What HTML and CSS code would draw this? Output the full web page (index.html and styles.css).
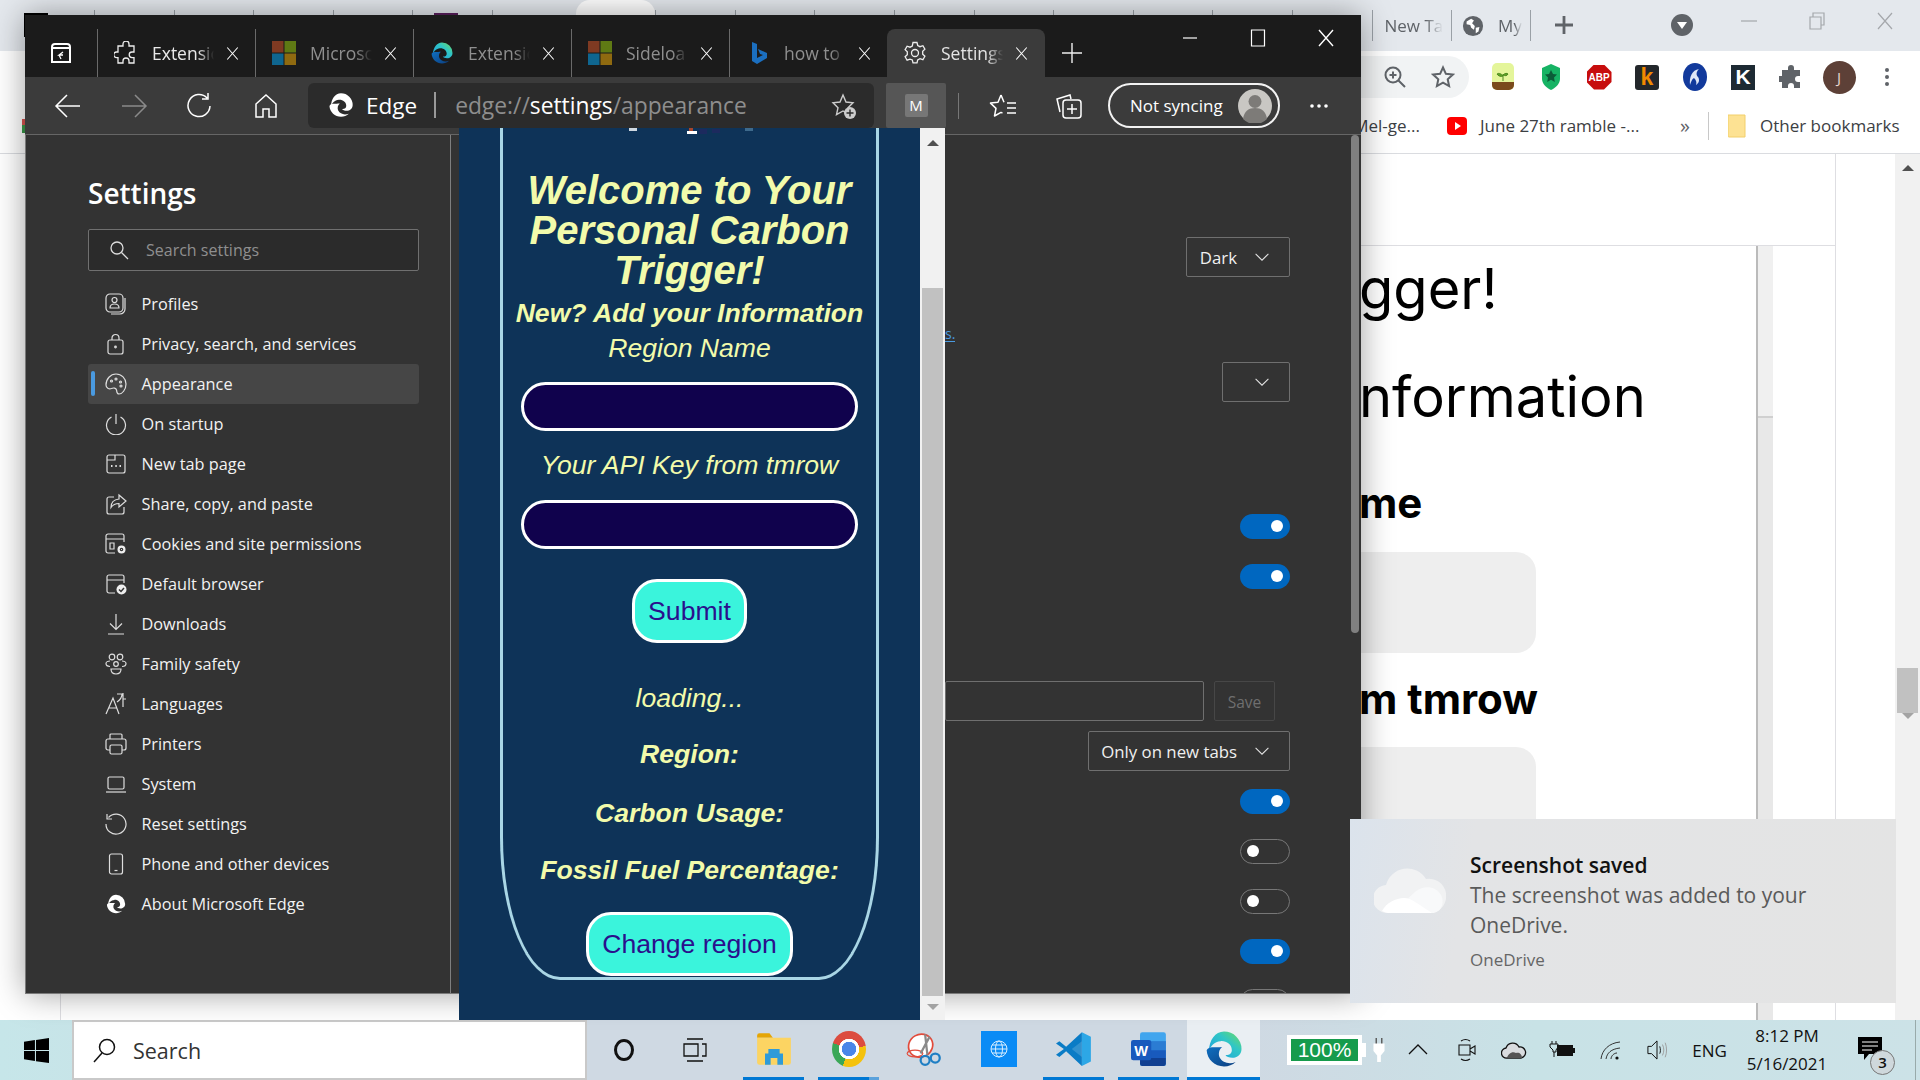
FILE: index.html
```html
<!DOCTYPE html>
<html lang="en">
<head>
  <meta charset="UTF-8">
  <meta name="viewport" content="width=device-width, initial-scale=1.0">
  <title>Carbon Trigger popup over Edge settings</title>
  <link rel="stylesheet" href="styles.css">
</head>
<body>
<svg class="sprite" aria-hidden="true">
  <defs>
    <linearGradient id="edgeTop" x1="0" y1="1" x2="1" y2="0"><stop offset="0" stop-color="#1b9de2"/><stop offset=".6" stop-color="#30c6c6"/><stop offset="1" stop-color="#6fdc5f"/></linearGradient>
    <linearGradient id="edgeLow" x1="0" y1="0" x2="1" y2="1"><stop offset="0" stop-color="#0f6fc0"/><stop offset="1" stop-color="#0c3f80"/></linearGradient>
    <symbol id="i-x" viewBox="0 0 20 20"><path d="M3 2l14 16M17 2L3 18" fill="none" stroke="currentColor" stroke-width="1.4"/></symbol>
    <symbol id="i-chev" viewBox="0 0 20 12"><path d="M2 2l8 8 8-8" fill="none" stroke="currentColor" stroke-width="1.3"/></symbol>
    <symbol id="i-edge" viewBox="0 0 24 24"><path fill="currentColor" d="M12 2a10 10 0 0 1 10 10c0 3-2.5 5-5.2 5-1.8 0-3.4-.7-3.9-1.6 2 .2 3.6-.9 3.6-2.8 0-3.3-3.2-5.4-6.4-5.1-3.6.3-5.9 3-6.6 5.5C3.5 7 7 2 12 2z"/><path fill="currentColor" d="M2.1 12.8C2.4 18 6.8 22 12 22c2.6 0 5-1 6.7-2.6-3.4 1.4-7.5.6-9.1-2.6-.9-1.8-.5-4.6 1.4-6-4.4.4-7.9-.7-8.9 2z"/></symbol>
    <symbol id="i-edgec" viewBox="0 0 24 24"><path fill="url(#edgeTop)" d="M12 1.5a10.5 10.5 0 0 1 10.5 10.5c0 3.2-2.6 5.3-5.5 5.3-1.9 0-3.6-.7-4.1-1.7 2.1.2 3.8-.9 3.8-2.9 0-3.5-3.4-5.7-6.7-5.4-3.8.3-6.2 3.1-7 5.8C3 6.8 6.8 1.5 12 1.5z"/><path fill="url(#edgeLow)" d="M1.6 12.8C1.9 18.3 6.5 22.5 12 22.5c2.7 0 5.2-1 7-2.7-3.6 1.5-7.9.6-9.6-2.7-.9-1.9-.5-4.8 1.5-6.3-4.6.4-8.3-.7-9.3 2z"/></symbol>
    <symbol id="i-ms" viewBox="0 0 24 24"><path fill="#7f3a22" d="M0 0h11.5v11.5H0z"/><path fill="#5f7a14" d="M12.5 0H24v11.5H12.5z"/><path fill="#0f6690" d="M0 12.5h11.5V24H0z"/><path fill="#8f6a10" d="M12.5 12.5H24V24H12.5z"/></symbol>
  </defs>
</svg>

<div class="desktop">
  <!-- chrome window in the back -->
  <div class="chrome">
    <div class="chrome-tabs">
      <span class="ctab-corner"></span>
      <span class="ctab"><i class="ctab-ico"></i></span>
      <span class="ctab"><i class="ctab-ico"></i></span>
      <span class="ctab"><i class="ctab-ico"></i></span>
      <span class="ctab"><i class="ctab-ico pale"></i></span>
      <span class="ctab"><i class="ctab-ico plum"></i></span>
      <span class="ctab"><i class="ctab-ico pale"></i></span>
      <span class="ctab on"></span>
      <span class="ctab"><i class="ctab-ico"></i></span>
      <span class="ctab"><i class="ctab-ico"></i></span>
      <span class="ctab"><i class="ctab-ico"></i></span>
      <span class="ctab"><i class="ctab-ico"></i></span>
      <span class="ctab"><i class="ctab-ico"></i></span>
      <span class="ctab"><i class="ctab-ico"></i></span>
      <span class="ctab"><i class="ctab-ico"></i></span>
      <span class="ctab"></span>
      <span class="ctab"></span>
      <span class="ctab ctab-named"><em class="ctab-title">New Ta</em></span>
      <span class="ctab ctab-named ctab-last"><svg class="ctab-globe" viewBox="0 0 24 24"><circle cx="12" cy="12" r="11" fill="#5f6368"/><path fill="#fff" d="M5 7l5-3 3 2-2 3 3 3-1 4-3-2-1-3-4-1zM15 14l4-1-1 5-3 2z"/></svg><em class="ctab-title ctab-my">My</em></span>
      <svg class="chrome-plus" viewBox="0 0 20 20"><path d="M10 1v18M1 10h18" stroke="#5f6368" stroke-width="2.8"/></svg>
      <svg class="chrome-down" viewBox="0 0 22 22"><circle cx="11" cy="11" r="11" fill="#5f6368"/><path d="M6 8h10l-5 7z" fill="#fff"/></svg>
      <svg class="chrome-ctl" viewBox="0 0 20 20"><path d="M2 10h16" stroke="#a4a7ab" stroke-width="1.2"/></svg>
      <svg class="chrome-ctl" viewBox="0 0 20 20"><path d="M3 6h11v12H3zM6 6V2h11v12h-3" fill="none" stroke="#a4a7ab" stroke-width="1.2"/></svg>
      <svg class="chrome-ctl" viewBox="0 0 20 20"><path d="M3 2l14 16M17 2L3 18" stroke="#a4a7ab" stroke-width="1.2"/></svg>
    </div>
    <div class="chrome-toolbar">
      <div class="omnibox">
        <span class="cext"><svg class="ic24" viewBox="0 0 24 24"><circle cx="10" cy="10" r="7.5" fill="none" stroke="#5f6368" stroke-width="2"/><path d="M15.5 15.5L22 22M6.5 10h7M10 6.5v7" stroke="#5f6368" stroke-width="2"/></svg></span>
        <span class="cext"><svg class="ic24" viewBox="0 0 24 24"><path d="M12 2.5l2.9 6.3 6.9.8-5.100 4.700 1.400 6.800-6.100-3.400-6.100 3.400 1.400-6.800L2.200 9.600l6.900-.8z" fill="none" stroke="#5f6368" stroke-width="2"/></svg></span>
      </div>
      <span class="cext"><svg class="ic28" viewBox="0 0 24 28"><rect x="1" y="0" width="22" height="27" rx="5" fill="#e4f59a"/><path d="M1 19h22v3a5 5 0 0 1-5 5H6a5 5 0 0 1-5-5z" fill="#7a4a1c"/><path d="M12 18v-7M12 13c-2-3-5-3-6-2 1 2 4 3 6 2zM12 12c2-2 4-2 5-1-1 2-3 2-5 1z" stroke="#4d8a1e" fill="#5fa427"/></svg></span>
      <span class="cext"><svg class="ic28" viewBox="0 0 24 28"><path d="M12 1l9 4v11c0 5-5 9-9 11-4-2-9-6-9-11V5z" fill="#16b364"/><path d="M12 7l2 4 4 .5-3 3 .8 4.5-3.800-2.200L8.200 19l.8-4.500-3-3 4-.5z" fill="#0b5c38"/></svg></span>
      <span class="cext"><span class="abp">ABP</span></span>
      <span class="cext"><span class="kbox">k</span></span>
      <span class="cext"><svg class="ic28" viewBox="0 0 24 28"><ellipse cx="12" cy="14" rx="12" ry="14" fill="#123a9c"/><path d="M7 22c-1-8 2-15 9-16-3 3-3 6-1 8 2 3 1 6-2 8 1-3 0-5-2-7-2 1-3 4-4 7z" fill="#dfe7f7"/></svg></span>
      <span class="cext"><span class="kbox kbox-dark">K</span></span>
      <span class="cext"><svg class="ic24" viewBox="0 0 24 24"><path fill="#5f6368" d="M9 3a3 3 0 0 1 6 0v2h6v6h-2a3 3 0 0 0 0 6h2v6h-6v-2a3 3 0 0 0-6 0v2H3v-6H1a3 3 0 0 1 0-6h2V5h6z"/></svg></span>
      <span class="cext"><span class="avatar-j">J</span></span>
      <span class="cext"><svg class="ic24" viewBox="0 0 24 24"><circle cx="12" cy="5" r="2" fill="#5f6368"/><circle cx="12" cy="12" r="2" fill="#5f6368"/><circle cx="12" cy="19" r="2" fill="#5f6368"/></svg></span>
    </div>
    <div class="chrome-bookmarks">
      <span class="bm-sliver"></span>
      <span class="bm-text bm-mel">Mel-ge...</span>
      <svg class="bm-yt" viewBox="0 0 20 20"><rect width="20" height="18" y="1" rx="4" fill="#f00"/><path d="M8 6l6 4-6 4z" fill="#fff"/></svg>
      <span class="bm-text bm-june">June 27th ramble -...</span>
      <span class="bm-more">»</span>
      <span class="bm-sep"></span>
      <svg class="bm-folder" viewBox="0 0 18 24"><path d="M0 1h17v22H1a1 1 0 0 1-1-1z" fill="#fde293" stroke="#f2cf6b"/></svg>
      <span class="bm-text">Other bookmarks</span>
    </div>
    <div class="chrome-page">
      <div class="page-left"></div>
      <div class="page-main">
        <div class="page-head"></div>
        <div class="page-row">
          <div class="page-copy">
            <p class="copy-big">gger!</p>
            <p class="copy-big copy-info">nformation</p>
            <p class="copy-bold">me</p>
            <div class="copy-field"></div>
            <p class="copy-bold copy-tmrow">m tmrow</p>
            <div class="copy-field copy-field-b"></div>
          </div>
          <div class="inner-scroll"><div class="inner-thumb"></div></div>
        </div>
      </div>
      <div class="page-side"></div>
      <div class="page-scroll">
        <i class="arrow-up"></i>
        <div class="page-thumb"></div>
        <i class="arrow-down"></i>
      </div>
    </div>
  </div>

  <!-- windows taskbar -->
  <div class="taskbar">
    <div class="start"><svg class="win-logo" viewBox="0 0 24 24"><path fill="#000" d="M0 3.5l10.5-1.500v9.500H0zM11.5 1.800L24 0v11.500H11.500zM0 12.500h10.500V22L0 20.500zM11.500 12.500H24V24l-12.500-1.800z"/></svg></div>
    <div class="task-search">
      <svg class="task-search-ico" viewBox="0 0 24 24"><circle cx="15" cy="9" r="7.5" fill="none" stroke="#111" stroke-width="1.5"/><path d="M10 15l-8 9" stroke="#111" stroke-width="1.5"/></svg>
      <span>Search</span>
    </div>
    <div class="cortana"><i class="cortana-ring"></i></div>
    <div class="taskview"><svg class="ic24" viewBox="0 0 24 24"><path d="M4 1h16M4 23h16M1 6h14v12H1zM19 6h4v12h-4" fill="none" stroke="#111" stroke-width="1.3"/></svg></div>
    <div class="task-slot"><div class="task-item running"><svg class="task-ico" viewBox="0 0 32 32"><path d="M1 4a2 2 0 0 1 2-2h9l3 4h-14z" fill="#e5a505"/><path d="M1 6h30v22a2 2 0 0 1-2 2H3a2 2 0 0 1-2-2z" fill="#fcd462"/><path d="M8 30V20h3v-4h10v4h3v10h-5v-6h-6v6z" fill="#2f9bd8"/></svg></div></div>
    <div class="task-slot"><div class="task-item running running-two"><i class="chrome-logo"></i></div></div>
    <div class="task-slot"><div class="task-item"><svg class="task-ico" viewBox="0 0 32 32"><ellipse cx="13" cy="13" rx="11" ry="10" transform="rotate(-30 13 13)" fill="#fff" stroke="#e24b3b" stroke-width="1.5"/><ellipse cx="8" cy="20" rx="7" ry="3" fill="none" stroke="#e24b3b"/><path d="M17 3l2 18M21 5l-8 15" stroke="#8a8a8a" stroke-width="2"/><circle cx="17" cy="26" r="4" fill="none" stroke="#1f7fc4" stroke-width="2"/><circle cx="26" cy="24" r="4" fill="none" stroke="#1f7fc4" stroke-width="2"/></svg></div></div>
    <div class="task-slot"><div class="task-item"><svg class="task-globe" viewBox="0 0 36 36"><rect width="36" height="36" fill="#0a8bf5"/><g fill="none" stroke="#d8eeff"><circle cx="18" cy="18" r="8"/><ellipse cx="18" cy="18" rx="3.5" ry="8"/><path d="M10 18h16M11 14h14M11 22h14"/></g></svg></div></div>
    <div class="task-slot"><div class="task-item running"><svg class="task-ico" viewBox="0 0 32 32"><path d="M23 1l8 4v22l-8 4z" fill="#2da7e6"/><path d="M23 1v30L9 18l-6 5-3-2 7-5-7-5 3-2 6 5z" fill="#0a7cc6"/><path d="M23 9v14l-9-7z" fill="#cfe9f7" opacity=".2"/></svg></div></div>
    <div class="task-slot"><div class="task-item running"><svg class="task-ico" viewBox="0 0 32 32"><rect x="8" y="1" width="23" height="30" rx="2" fill="#41a5ee"/><path d="M8 9h23v8H8z" fill="#2b7cd3"/><path d="M8 17h23v7H8z" fill="#185abd"/><path d="M8 24h23v5a2 2 0 0 1-2 2H10a2 2 0 0 1-2-2z" fill="#103f91"/><rect y="8" width="18" height="18" rx="2" fill="#185abd"/><text class="word-w" x="9" y="22" text-anchor="middle">W</text></svg></div></div>
    <div class="task-slot"><div class="task-item running task-item-on"><svg class="task-edge" viewBox="0 0 24 24"><use href="#i-edgec"/></svg></div></div>
    <div class="batt-app"><span>100%</span></div>
    <i class="batt-nub"></i>
    <div class="tray tray-plug"><svg class="tray-ico" viewBox="0 0 16 26"><path d="M5 0v8M11 0v8" stroke="#555" stroke-width="1.5"/><path d="M2 6h12v8l-4 5v7H6v-7l-4-5z" fill="#fff"/></svg></div>
    <div class="tray tray-chev"><svg class="tray-ico" viewBox="0 0 20 20"><path d="M1 14l9-9 9 9" fill="none" stroke="#111" stroke-width="1.3"/></svg></div>
    <div class="tray tray-meet"><svg class="tray-ico" viewBox="0 0 20 24"><path d="M2 7h11v10H2zM13 11l5-3v8l-5-3zM4 3c3-2 6-2 9 0M4 21c3 2 6 2 9 0" fill="none" stroke="#111" stroke-width="1.1"/></svg></div>
    <div class="tray tray-cloud"><svg class="tray-cloud-ico" viewBox="0 0 26 18"><path d="M6 17a5 5 0 0 1-1-10 7 7 0 0 1 13-1 5.5 5.5 0 0 1 2 11z" fill="#d9dcdf" stroke="#111" stroke-width="1.3"/><path d="M6 17c1-4 5-7 9-5 3-1 6 1 6 5z" fill="#555"/></svg></div>
    <div class="tray tray-batt"><svg class="tray-cloud-ico" viewBox="0 0 26 20"><path d="M3 1v3M7 1v3M1 4h8v3l-2 3v2H4v-2L1 7zM5 12v5" stroke="#111" fill="none"/><rect x="8" y="5" width="16" height="11" fill="#111"/><rect x="24" y="8" width="2" height="5" fill="#111"/></svg></div>
    <div class="tray tray-wifi"><svg class="tray-cloud-ico" viewBox="0 0 22 20"><path d="M1 19C2 10 9 3 20 2M6 19c1-6 5-10 14-11M11 19c0-3 3-6 6-6" fill="none" stroke="#333"/><circle cx="17" cy="18" r="1.6" fill="#111"/></svg></div>
    <div class="tray tray-vol"><svg class="tray-ico" viewBox="0 0 22 24"><path d="M1 8h4l6-6v20l-6-6H1z" fill="none" stroke="#111" stroke-width="1.1"/><path d="M14 8c1 3 1 6 0 8" fill="none" stroke="#111"/><path d="M17 6c2 4 2 8 0 12M20 4c2 5 2 11 0 16" fill="none" stroke="#999"/></svg></div>
    <div class="tray tray-eng">ENG</div>
    <div class="tray tray-clock"><span>8:12 PM</span><span>5/16/2021</span></div>
    <div class="tray tray-notif">
      <svg class="notif-ico" viewBox="0 0 24 24"><path d="M0 0h24v17H11l-5 6v-6H0z" fill="#000"/><path d="M4 5h16M4 9h16M4 13h10" stroke="#fff"/></svg>
      <span class="notif-badge">3</span>
    </div>
    <i class="show-desktop"></i>
  </div>

  <!-- edge window -->
  <section class="edge">
    <div class="edge-title">
      <div class="tab-action"><svg class="ic24" viewBox="0 0 24 24"><path d="M3 6a3 3 0 0 1 3-3h12a3 3 0 0 1 3 3v15H3z" fill="none" stroke="#fff" stroke-width="2"/><path d="M3 7h18" stroke="#fff" stroke-width="2"/><path d="M14 11l-4 3h4M10 14l2 4" fill="none" stroke="#fff" stroke-width="1.3"/></svg></div>
      <div class="tab tab-first">
        <svg class="tab-ico" viewBox="0 0 24 24"><path d="M9 3a3 3 0 0 1 6 0v2h5v6h-2a2.8 2.8 0 0 0 0 5.600h2V22h-5v-2a3 3 0 0 0-6 0v2H4v-5.400H2.500a2.800 2.800 0 0 1 0-5.600H4V5h5z" fill="none" stroke="#eee" stroke-width="1.3"/></svg>
        <span class="tab-title">Extensic</span>
        <svg class="tab-x" viewBox="0 0 20 20"><use href="#i-x"/></svg>
      </div>
      <div class="tab">
        <svg class="tab-ico" viewBox="0 0 24 24"><use href="#i-ms"/></svg>
        <span class="tab-title">Microsc</span>
        <svg class="tab-x" viewBox="0 0 20 20"><use href="#i-x"/></svg>
      </div>
      <div class="tab">
        <svg class="tab-ico" viewBox="0 0 24 24"><use href="#i-edgec"/></svg>
        <span class="tab-title">Extensic</span>
        <svg class="tab-x" viewBox="0 0 20 20"><use href="#i-x"/></svg>
      </div>
      <div class="tab">
        <svg class="tab-ico" viewBox="0 0 24 24"><use href="#i-ms"/></svg>
        <span class="tab-title">Sideloa</span>
        <svg class="tab-x" viewBox="0 0 20 20"><use href="#i-x"/></svg>
      </div>
      <div class="tab">
        <svg class="tab-ico" viewBox="0 0 24 24"><path fill="#1b6fc0" d="M6 1l5 2v14l6-3-3-1-2-5 9 4v5L11 23l-5-3z"/></svg>
        <span class="tab-title">how to</span>
        <svg class="tab-x" viewBox="0 0 20 20"><use href="#i-x"/></svg>
      </div>
      <div class="tab tab-active">
        <svg class="tab-ico" viewBox="0 0 24 24"><g fill="none" stroke="#eee" stroke-width="1.3"><circle cx="12" cy="12" r="3.5"/><path d="M10 1.5h4l.7 3 2.300 1.200 2.900-1 2 3.500-2.200 2.100v2.800l2.200 2.100-2 3.500-2.900-1-2.300 1.200-.7 3h-4l-.7-3L7 18.200l-2.900 1-2-3.500 2.200-2.100v-2.800L2.100 8.700l2-3.500 2.900 1 2.300-1.200z"/></g></svg>
        <span class="tab-title">Settings</span>
        <svg class="tab-x" viewBox="0 0 20 20"><use href="#i-x"/></svg>
      </div>
      <div class="tab-plus"><svg class="ic24" viewBox="0 0 24 24"><path d="M12 2v20M2 12h20" stroke="#eee" stroke-width="1.4"/></svg></div>
      <div class="win-ctls">
        <span class="win-ctl"><svg class="ic20" viewBox="0 0 20 20"><path d="M3 10h14" stroke="#fff" stroke-width="1.2"/></svg></span>
        <span class="win-ctl"><svg class="ic20" viewBox="0 0 20 20"><path d="M3.5 2h13v16h-13z" fill="none" stroke="#fff" stroke-width="1.2"/></svg></span>
        <span class="win-ctl"><svg class="ic20" viewBox="0 0 20 20"><use href="#i-x"/></svg></span>
      </div>
    </div>

    <div class="edge-toolbar">
      <span class="tool"><svg class="ic28" viewBox="0 0 28 28"><path d="M26 14H3M13 3L2 14l11 11" fill="none" stroke="#fff" stroke-width="1.5"/></svg></span>
      <span class="tool"><svg class="ic28" viewBox="0 0 28 28"><path d="M2 14h23M15 3l11 11-11 11" fill="none" stroke="#8a8a8a" stroke-width="1.5"/></svg></span>
      <span class="tool"><svg class="ic28" viewBox="0 0 28 28"><path d="M21 6a11 11 0 1 0 3 8M22 1v6h-6" fill="none" stroke="#fff" stroke-width="1.5"/></svg></span>
      <span class="tool"><svg class="ic28" viewBox="0 0 28 28"><path d="M4 12l10-9 10 9v13h-7v-8h-6v8H4z" fill="none" stroke="#fff" stroke-width="1.5"/></svg></span>
      <div class="address">
        <svg class="address-edge" viewBox="0 0 24 24"><use href="#i-edge"/></svg>
        <span class="address-name">Edge</span>
        <i class="address-sep"></i>
        <span class="address-url">edge://<b>settings</b>/appearance</span>
        <svg class="address-star" viewBox="0 0 26 28"><path d="M12 2l3 7 7 .7-5 5 1.5 7-6.500-3.700L5.500 21.700 7 14.700l-5-5L9 9z" fill="none" stroke="#ccc" stroke-width="1.4"/><circle cx="19" cy="20" r="6" fill="#ccc"/><path d="M19 16.500v7M15.500 20h7" stroke="#2b2b2b" stroke-width="1.4"/></svg>
      </div>
      <div class="ext-m"><span>M</span></div>
      <i class="tool-sep"></i>
      <span class="tool tool-fav"><svg class="ic28" viewBox="0 0 28 28"><path d="M12 3L9 10.200l-7.500.9 5.500 5.300-1.500 7.600 6.500-3.600 1.500.8M12 3l3 7.200" fill="none" stroke="#fff" stroke-width="1.5" stroke-linejoin="round"/><path d="M18 11h9M18 16h9M18 21h9" stroke="#fff" stroke-width="1.5"/></svg></span>
      <span class="tool"><svg class="ic28" viewBox="0 0 28 28"><path d="M5 20L2 7l13-4 1 4" fill="none" stroke="#fff" stroke-width="1.5"/><rect x="8" y="8" width="18" height="18" rx="3" fill="none" stroke="#fff" stroke-width="1.5"/><path d="M17 12v10M12 17h10" stroke="#fff" stroke-width="1.5"/></svg></span>
      <div class="sync-pill">
        <span>Not syncing</span>
        <svg class="sync-avatar" viewBox="0 0 34 34"><circle cx="17" cy="17" r="17" fill="#c9c7c3"/><circle cx="17" cy="12.5" r="6.5" fill="#7d7b78"/><path d="M5 30c1-8 6-11 12-11s11 3 12 11a17 17 0 0 1-24 0z" fill="#7d7b78"/></svg>
      </div>
      <span class="tool tool-more"><svg class="ic20" viewBox="0 0 20 20"><circle cx="3" cy="10" r="1.8" fill="#fff"/><circle cx="10" cy="10" r="1.8" fill="#fff"/><circle cx="17" cy="10" r="1.8" fill="#fff"/></svg></span>
    </div>

    <div class="edge-body">
      <aside class="sidebar">
        <h1 class="side-title">Settings</h1>
        <div class="side-search">
          <svg class="ic20" viewBox="0 0 20 20"><circle cx="8" cy="8" r="6" fill="none" stroke="#ddd" stroke-width="1.3"/><path d="M12.5 12.5L19 19" stroke="#ddd" stroke-width="1.3"/></svg>
          <span>Search settings</span>
        </div>
        <ul class="side-nav">
          <li><svg class="nav-ico" viewBox="0 0 22 22"><rect x="1" y="1" width="17" height="18" rx="4"/><path d="M20 5v11a5 5 0 0 1-5 5H6"/><circle cx="9.5" cy="7" r="2.5"/><path d="M5 15c0-3 2-4 4.500-4s4.500 1 4.500 4z"/></svg>Profiles</li>
          <li><svg class="nav-ico" viewBox="0 0 22 22"><rect x="3" y="7" width="15" height="14" rx="2"/><path d="M7 7V5a3.5 3.5 0 0 1 7 0v2"/><circle cx="10.5" cy="14" r=".8"/></svg>Privacy, search, and services</li>
          <li class="on"><svg class="nav-ico" viewBox="0 0 22 22"><path d="M11 1a10 10 0 0 1 10 10c0 6-4 10-7 10-2.500 0-2-2-2.500-4-.5-2-3-2.500-5-1.500C4 16.500 1 15 1 12 1 6 5.500 1 11 1z"/><circle cx="11" cy="6" r="1"/><circle cx="15.5" cy="9" r="1"/><circle cx="16" cy="13" r="1"/><circle cx="6.5" cy="8" r="1"/></svg>Appearance</li>
          <li><svg class="nav-ico" viewBox="0 0 22 22"><path d="M11 1v10M6.500 4a9.500 9.500 0 1 0 9 0"/></svg>On startup</li>
          <li><svg class="nav-ico" viewBox="0 0 22 22"><rect x="2" y="2" width="18" height="18" rx="2"/><path d="M2 7h8V2"/><path d="M6 13h1.500M10.300 13h1.500M14.500 13H16" stroke-width="2"/></svg>New tab page</li>
          <li><svg class="nav-ico" viewBox="0 0 22 22"><path d="M9 4H4a2 2 0 0 0-2 2v13a2 2 0 0 0 2 2h13a2 2 0 0 0 2-2v-5"/><path d="M14 2l7 6-7 6v-3.500c-4 0-6 1-8 4 0-5 3-8 8-8.500z"/></svg>Share, copy, and paste</li>
          <li><svg class="nav-ico" viewBox="0 0 22 22"><path d="M10 20H3a2 2 0 0 1-2-2V3a2 2 0 0 1 2-2h14a2 2 0 0 1 2 2v6M1 6h18"/><path d="M5 10h4v6H5z"/><circle class="nav-fill" cx="16.5" cy="16.5" r="4"/><circle cx="16.5" cy="16.5" r="1.2" stroke="#333"/></svg>Cookies and site permissions</li>
          <li><svg class="nav-ico" viewBox="0 0 22 22"><path d="M10 20H4a2 2 0 0 1-2-2V4a2 2 0 0 1 2-2h13a2 2 0 0 1 2 2v6M2 7h17"/><circle class="nav-fill" cx="16.5" cy="16.5" r="5"/><path d="M14 16.500l2 2 3-3.500" stroke="#333" stroke-width="1.5"/></svg>Default browser</li>
          <li><svg class="nav-ico" viewBox="0 0 22 22"><path d="M11 1v15M5 10.500l6 6 6-6M3 21h16"/></svg>Downloads</li>
          <li><svg class="nav-ico" viewBox="0 0 22 22"><circle cx="7" cy="4" r="2.8"/><circle cx="15" cy="4" r="2.8"/><circle cx="11" cy="11" r="2.3"/><path d="M5 13.500C2 13.500 1 12 1 10.500 1 9 3 8 5 8M17 13.500c3 0 4-1.500 4-3 0-1.500-2-2.500-4-2.500M6 16h10c0 3-2 5-5 5s-5-2-5-5z"/></svg>Family safety</li>
          <li><svg class="nav-ico" viewBox="0 0 22 22"><path d="M1 21L8 5l6 16M4 15h8M12 1h5c0 4-2 6-5 8M18 0v14M18 6h3"/></svg>Languages</li>
          <li><svg class="nav-ico" viewBox="0 0 22 22"><path d="M5 6V2a1 1 0 0 1 1-1h10a1 1 0 0 1 1 1v4M5 17H3a2 2 0 0 1-2-2V8a2 2 0 0 1 2-2h16a2 2 0 0 1 2 2v7a2 2 0 0 1-2 2h-2"/><rect x="5" y="12" width="12" height="9" rx="1.5"/></svg>Printers</li>
          <li><svg class="nav-ico" viewBox="0 0 22 22"><rect x="3" y="4" width="16" height="12" rx="1.5"/><path d="M1 19h20"/></svg>System</li>
          <li><svg class="nav-ico" viewBox="0 0 22 22"><path d="M3.500 4.500a10 10 0 1 1-2.500 6.500M2 1v5h5"/></svg>Reset settings</li>
          <li><svg class="nav-ico" viewBox="0 0 22 22"><rect x="4.5" y="1" width="13" height="20" rx="2"/><path d="M9.500 17.500h3"/></svg>Phone and other devices</li>
          <li><svg class="nav-ico nav-edge" viewBox="0 0 24 24"><use href="#i-edge"/></svg>About Microsoft Edge</li>
        </ul>
      </aside>
      <div class="panel">
        <div class="select select-dark"><span>Dark</span><svg class="chev" viewBox="0 0 20 12"><use href="#i-chev"/></svg></div>
        <span class="panel-link">s.</span>
        <div class="select select-empty"><svg class="chev" viewBox="0 0 20 12"><use href="#i-chev"/></svg></div>
        <div class="toggle toggle-first"></div>
        <div class="toggle toggle-gap"></div>
        <div class="save-row">
          <div class="save-input"></div>
          <div class="save-btn">Save</div>
        </div>
        <div class="select select-tabs"><span>Only on new tabs</span><svg class="chev" viewBox="0 0 20 12"><use href="#i-chev"/></svg></div>
        <div class="toggle toggle-after"></div>
        <div class="toggle toggle-gap off"></div>
        <div class="toggle toggle-gap off"></div>
        <div class="toggle toggle-gap"></div>
        <div class="toggle toggle-gap off"></div>
      </div>
      <div class="edge-scroll"><div class="edge-thumb"></div></div>
    </div>
  </section>

  <!-- extension popup -->
  <div class="popup">
    <div class="popup-body">
      <div class="oval">
        <svg class="oval-art" viewBox="0 0 150 6"><rect x="12" y="0" width="8" height="3" fill="#cfd8e0"/><rect x="72" y="0" width="4" height="4" fill="#a8452c"/><rect x="70" y="3" width="10" height="3" fill="#fff"/><rect x="82" y="1" width="8" height="5" fill="#1c2a5e"/><rect x="95" y="1" width="8" height="4" fill="#1c2a5e"/><rect x="128" y="0" width="8" height="3" fill="#3e6a8c"/></svg>
        <h1 class="pop-title">Welcome to Your Personal Carbon Trigger!</h1>
        <h2 class="pop-sub">New? Add your Information</h2>
        <label class="pop-label pop-label-a">Region Name</label>
        <div class="pop-input pop-input-a"></div>
        <label class="pop-label pop-label-b">Your API Key from tmrow</label>
        <div class="pop-input pop-input-b"></div>
        <button class="pop-btn pop-submit">Submit</button>
        <p class="pop-label pop-loading">loading...</p>
        <p class="pop-stat pop-region">Region:</p>
        <p class="pop-stat pop-carbon">Carbon Usage:</p>
        <p class="pop-stat pop-fossil">Fossil Fuel Percentage:</p>
        <button class="pop-btn pop-change">Change region</button>
      </div>
    </div>
    <div class="pop-scroll">
      <i class="arrow-up pop-arrow-up"></i>
      <div class="pop-thumb"></div>
      <i class="arrow-down pop-arrow-down"></i>
    </div>
  </div>

  <!-- onedrive toast -->
  <div class="toast">
    <svg class="toast-cloud" viewBox="0 0 72 46"><path d="M14 46a14 14 0 0 1-2-28A22 22 0 0 1 52 12a17 17 0 0 1 6 34z" fill="#f1f2f3"/><path d="M18 46l24-22c8-6 20-5 25 4 4 8 0 18-9 18z" fill="#f8f9fa"/><path d="M8 44c4-8 14-13 22-13 6 0 10 3 28 15H14a14 14 0 0 1-6-2z" fill="#fff"/></svg>
    <div class="toast-text">
      <strong>Screenshot saved</strong>
      <p>The screenshot was added to your OneDrive.</p>
      <small>OneDrive</small>
    </div>
  </div>
</div>
</body>
</html>
```

FILE: styles.css
```css
* {
  box-sizing: border-box;
}
html, body {
  margin: 0;
  padding: 0;
}
body {
  font-family: "Open Sans", "Noto Sans", sans-serif;
  background: #fff;
}
p, h1, h2, ul {
  margin: 0;
  padding: 0;
}
i, em {
  font-style: normal;
}
.sprite {
  position: absolute;
  width: 0;
  height: 0;
}
.ic20 { width: 20px; height: 20px; }
.ic24 { width: 24px; height: 24px; }
.ic28 { width: 28px; height: 28px; }

.desktop {
  position: relative;
  width: 1920px;
  height: 1080px;
  overflow: hidden;
  display: flex;
  flex-direction: column;
}

/* chrome behind everything */
.chrome {
  flex: 1;
  display: flex;
  flex-direction: column;
  min-height: 0;
}
.chrome-tabs {
  height: 51px;
  background: #e4e8ed;
  display: flex;
  align-items: flex-start;
  flex-shrink: 0;
}
.ctab-corner {
  width: 24px;
  height: 24px;
  background: #000;
  margin: 13px 46px 0 24px;
  flex-shrink: 0;
}
.ctab {
  width: 79.6px;
  height: 31px;
  margin-top: 10px;
  border-left: 1px solid #9aa0a6;
  display: flex;
  align-items: center;
  padding-left: 21px;
  flex-shrink: 0;
}
.ctab.on {
  height: 51px;
  margin: 0 0 0 4px;
  background: #fff;
  border: 0;
  border-radius: 14px 14px 0 0;
}
.ctab-ico {
  width: 16px;
  height: 16px;
  margin-top: -4px;
  border-radius: 50%;
  background: #3c3c3c;
}
.ctab-ico.pale { background: #bbb; }
.ctab-ico.plum { background: #5b1f5e; border-radius: 0; width: 24px; margin-top: -10px; }
.ctab-named { padding-left: 12px; }
.ctab-title {
  font-size: 17px;
  color: #5f6368;
  white-space: nowrap;
  -webkit-mask-image: linear-gradient(90deg, #000 70%, transparent);
  mask-image: linear-gradient(90deg, #000 70%, transparent);
}
.ctab-last {
  border-right: 1px solid #9aa0a6;
  padding-left: 10px;
}
.ctab-globe { width: 22px; height: 22px; flex-shrink: 0; }
.ctab-my { margin-left: 14px; }
.chrome-plus {
  width: 20px;
  height: 20px;
  margin: 15px 0 0 23px;
  flex-shrink: 0;
}
.chrome-down {
  width: 22px;
  height: 22px;
  margin: 14px 0 0 97px;
  flex-shrink: 0;
}
.chrome-ctl {
  width: 20px;
  height: 20px;
  margin: 11px 0 0 48px;
  flex-shrink: 0;
}
.chrome-down + .chrome-ctl { margin-left: 46px; }
.chrome-toolbar {
  height: 52px;
  display: flex;
  align-items: center;
  flex-shrink: 0;
  background: #fff;
}
.omnibox {
  width: 1359px;
  margin: 0 10px 0 110px;
  height: 42px;
  background: #f1f3f4;
  border-radius: 0 21px 21px 0;
  display: flex;
  justify-content: flex-end;
  align-items: center;
  padding-right: 2px;
}
.cext {
  width: 48px;
  height: 40px;
  display: flex;
  align-items: center;
  justify-content: center;
  flex-shrink: 0;
}
.abp {
  width: 25px;
  height: 25px;
  background: #c70d0d;
  color: #fff;
  font: bold 10px "Liberation Sans", sans-serif;
  display: flex;
  align-items: center;
  justify-content: center;
  clip-path: polygon(30% 0, 70% 0, 100% 30%, 100% 70%, 70% 100%, 30% 100%, 0 70%, 0 30%);
}
.kbox {
  width: 24px;
  height: 25px;
  background: #23272b;
  color: #f08a00;
  border-radius: 3px;
  font: bold 23px/24px "Liberation Sans", sans-serif;
  text-align: center;
}
.kbox-dark {
  color: #fff;
  font-size: 21px;
  background: #1d2a33;
  border-radius: 0;
}
.avatar-j {
  width: 33px;
  height: 33px;
  border-radius: 50%;
  background: #5d4037;
  color: #e9d9cf;
  text-align: center;
  font-size: 15px;
  line-height: 33px;
}
.chrome-bookmarks {
  height: 51px;
  padding-bottom: 5px;
  border-bottom: 1px solid #dadce0;
  display: flex;
  align-items: center;
  flex-shrink: 0;
  background: #fff;
}
.bm-sliver {
  width: 3px;
  height: 14px;
  margin-left: 22px;
  background: linear-gradient(#d9534f 40%, #3a9a4a 40%);
}
.bm-text {
  font-size: 17px;
  color: #3c4043;
  white-space: nowrap;
}
.bm-mel {
  width: 70px;
  margin-left: 1325px;
  text-align: right;
  flex-shrink: 0;
}
.bm-yt { width: 20px; height: 20px; margin-left: 27px; flex-shrink: 0; }
.bm-june { margin-left: 13px; width: 182px; }
.bm-more { color: #5f6368; font-size: 20px; margin-left: 18px; width: 14px; }
.bm-sep { width: 1px; height: 28px; background: #c8c8c8; margin-left: 14px; }
.bm-folder { width: 18px; height: 24px; margin: 0 14px 0 19px; }
.chrome-page {
  flex: 1;
  display: flex;
  min-height: 0;
  background: #fff;
}
.page-left {
  width: 61px;
  border-right: 1px solid #dedee2;
}
.page-main {
  width: 1775px;
  border-right: 1px solid #dedee2;
  display: flex;
  flex-direction: column;
}
.page-head {
  height: 92px;
  border-bottom: 1px solid #dedee2;
}
.page-row {
  flex: 1;
  display: flex;
  min-height: 0;
}
.page-copy {
  width: 1696px;
  padding-left: 1298px;
  overflow: hidden;
  color: #000;
  font-family: Inter, "Open Sans", sans-serif;
  white-space: nowrap;
}
.copy-big {
  font-size: 56px;
  line-height: 64px;
  margin-top: 11px;
}
.copy-info { margin-top: 44px; }
.copy-bold {
  font-size: 42px;
  font-weight: 700;
  line-height: 46px;
  margin-top: 51px;
}
.copy-field {
  width: 177px;
  height: 101px;
  margin-top: 26px;
  background: #eee;
  border-radius: 0 20px 20px 0;
}
.copy-tmrow { margin-top: 23px; }
.copy-field-b {
  height: 130px;
  margin-top: 25px;
}
.inner-scroll {
  width: 17px;
  margin-left: -1px;
  background: #e8e8e8;
  border-left: 2px solid #bbb;
}
.inner-thumb {
  height: 172px;
  background: #f0f0f0;
  border-bottom: 2px solid #d0d0d0;
}
.page-side {
  width: 59px;
}
.page-scroll {
  width: 25px;
  background: #f1f1f1;
  display: flex;
  flex-direction: column;
  align-items: center;
  padding-top: 11px;
}
.arrow-up {
  width: 0;
  height: 0;
  border: 6px solid transparent;
  border-top: 0;
  border-bottom: 6px solid #505050;
}
.arrow-down {
  width: 0;
  height: 0;
  border: 6px solid transparent;
  border-bottom: 0;
  border-top: 6px solid #a3a3a3;
}
.page-thumb {
  width: 21px;
  height: 45px;
  margin-top: 497px;
  background: #c1c1c1;
}

/* taskbar */
.taskbar {
  height: 60px;
  flex-shrink: 0;
  display: flex;
  align-items: center;
  color: #111;
  background: linear-gradient(90deg, #c6e6e9 0, #cfd9e3 30%, #cfd9e3 65%, #c8e2e6 80%, #cce2e7 100%);
}
.start {
  width: 72px;
  display: flex;
  justify-content: center;
}
.win-logo { width: 25px; height: 25px; }
.task-search {
  width: 515px;
  height: 60px;
  background: #fff;
  border: 2px solid #c9c9c9;
  display: flex;
  align-items: center;
  padding-left: 18px;
  font-size: 21.5px;
  color: #333;
}
.task-search-ico { width: 24px; height: 26px; margin-right: 17px; }
.cortana {
  width: 74px;
  display: flex;
  justify-content: center;
}
.cortana-ring {
  width: 20px;
  height: 22px;
  border-radius: 50%;
  border: 3px solid #111;
}
.taskview {
  width: 68px;
  display: flex;
  justify-content: center;
}
.task-slot {
  width: 75px;
  height: 60px;
  display: flex;
  justify-content: center;
  flex-shrink: 0;
}
.taskview + .task-slot { margin-left: 7px; }
.task-item {
  width: 61px;
  height: 60px;
  display: flex;
  align-items: center;
  justify-content: center;
  border-bottom: 3px solid transparent;
}
.task-item.running { border-bottom-color: #0078d4; }
.running-two {
  border-image: linear-gradient(90deg, #0078d4 83%, #5ba2dc 83%) 1;
}
.task-item-on {
  width: 73px;
  background: #eaeff3;
}
.task-ico { width: 36px; height: 36px; }
.task-globe { width: 36px; height: 36px; }
.task-edge { width: 40px; height: 40px; }
.word-w {
  font: bold 13px "Liberation Sans", sans-serif;
  fill: #fff;
}
.chrome-logo {
  width: 34px;
  height: 36px;
  border-radius: 50%;
  background:
    radial-gradient(circle, #4a86e8 0 7px, #fff 7.5px 10px, transparent 10.5px),
    conic-gradient(from -70deg, #dc4c3f 0 150deg, #f4c20d 150deg 270deg, #3aa757 270deg 360deg);
}
.batt-app {
  width: 75px;
  height: 30px;
  margin-left: 26px;
  background: #169b4c;
  border: 4px solid #fff;
  color: #fff;
  font: 21px/22px "Liberation Sans", sans-serif;
  text-align: center;
}
.batt-nub {
  width: 4px;
  height: 14px;
  background: #fff;
}
.tray {
  display: flex;
  align-items: center;
  justify-content: center;
  height: 60px;
  flex-shrink: 0;
}
.tray-ico { width: 20px; height: 24px; }
.tray-cloud-ico { width: 26px; height: 20px; }
.tray-plug { width: 26px; }
.tray-chev { width: 52px; }
.tray-meet { width: 46px; }
.tray-cloud { width: 48px; }
.tray-batt { width: 48px; }
.tray-wifi { width: 50px; }
.tray-vol { width: 42px; }
.tray-eng { width: 63px; font-size: 17px; }
.tray-clock {
  width: 92px;
  flex-direction: column;
  font-size: 17px;
  line-height: 28px;
}
.tray-notif {
  width: 74px;
  position: relative;
}
.notif-ico { width: 24px; height: 24px; margin-top: -2px; }
.notif-badge {
  position: absolute;
  left: 37px;
  top: 30px;
  width: 25px;
  height: 25px;
  border-radius: 50%;
  background: #cfd8dc;
  border: 1px solid #777;
  text-align: center;
  font-size: 15px;
  line-height: 23px;
  font-weight: 600;
}
.show-desktop {
  width: 3px;
  height: 60px;
  margin-left: auto;
  margin-right: 2px;
  border-left: 1px solid #9aa;
}

/* edge window */
.edge {
  position: absolute;
  left: 25px;
  top: 15px;
  width: 1336px;
  height: 979px;
  display: flex;
  flex-direction: column;
  box-shadow: 0 0 30px rgba(0, 0, 0, 0.38);
  color: #eee;
}
.edge-title {
  height: 62px;
  background: #1b1b1b;
  display: flex;
  align-items: flex-end;
  flex-shrink: 0;
}
.tab-action {
  width: 72px;
  height: 48px;
  display: flex;
  align-items: center;
  justify-content: center;
}
.tab {
  width: 158px;
  height: 48px;
  display: flex;
  align-items: center;
  padding-left: 16px;
  flex-shrink: 0;
  color: #8f8f8f;
  border-left: 1px solid #6a6a6a;
}
.tab-active {
  background: #3b3b3b;
  border-left: 0;
  border-radius: 8px 8px 0 0;
  color: #e4e4e4;
}
.tab-first { color: #e8e8e8; }
.tab-ico { width: 24px; height: 24px; flex-shrink: 0; }
.tab-title {
  width: 62px;
  margin-left: 14px;
  font-size: 17.5px;
  white-space: nowrap;
  -webkit-mask-image: linear-gradient(90deg, #000 75%, transparent);
  mask-image: linear-gradient(90deg, #000 75%, transparent);
}
.tab-x {
  width: 15px;
  height: 15px;
  margin-left: 11px;
  color: #fff;
  flex-shrink: 0;
}
.tab-plus {
  width: 54px;
  height: 48px;
  display: flex;
  align-items: center;
  justify-content: center;
}
.win-ctls {
  display: flex;
  margin-left: auto;
  margin-right: 1px;
  align-self: flex-start;
}
.win-ctl {
  width: 68px;
  height: 46px;
  display: flex;
  align-items: center;
  justify-content: center;
  color: #fff;
}
.edge-toolbar {
  height: 58px;
  background: #3b3b3b;
  border-bottom: 1px solid #666;
  display: flex;
  align-items: center;
  padding-left: 10px;
  flex-shrink: 0;
}
.tool {
  width: 66px;
  height: 44px;
  display: flex;
  align-items: center;
  justify-content: center;
  flex-shrink: 0;
}
.address {
  width: 566px;
  height: 45px;
  margin: 0 0 1px 9px;
  background: #2b2b2b;
  border-radius: 6px;
  display: flex;
  align-items: center;
  padding-left: 19px;
  position: relative;
}
.address-edge { width: 28px; height: 28px; color: #fff; }
.address-name {
  margin-left: 11px;
  font-size: 22.5px;
  color: #fff;
}
.address-sep {
  width: 2px;
  height: 26px;
  margin-left: 17px;
  background: #999;
}
.address-url {
  margin-left: 19px;
  font-size: 22.8px;
  color: #8e8e8e;
  white-space: nowrap;
}
.address-url b {
  font-weight: 400;
  color: #fff;
}
.address-star {
  width: 26px;
  height: 28px;
  position: absolute;
  right: 17px;
  top: 10px;
}
.ext-m {
  width: 60px;
  height: 45px;
  margin-left: 12px;
  background: #565656;
  display: flex;
  align-items: center;
  justify-content: center;
  border-radius: 2px;
}
.ext-m span {
  width: 23px;
  height: 23px;
  background: #777;
  border-radius: 2px;
  text-align: center;
  font-size: 15px;
  line-height: 23px;
  color: #fff;
}
.tool-sep {
  width: 1px;
  height: 26px;
  margin-left: 12px;
  background: #777;
}
.tool-fav { margin-left: 11px; }
.sync-pill {
  width: 172px;
  height: 45px;
  margin-left: 6px;
  border: 2px solid #f2f2f2;
  border-radius: 23px;
  display: flex;
  align-items: center;
  padding-left: 20px;
  font-size: 17px;
  color: #fff;
  white-space: nowrap;
}
.sync-avatar {
  width: 34px;
  height: 34px;
  margin-left: auto;
  margin-right: 6px;
  flex-shrink: 0;
}
.tool-more { margin-left: 6px; }
.edge-body {
  flex: 1;
  display: flex;
  min-height: 0;
  background: #333;
  border: 1px solid #7a7a7a;
  border-top: 0;
  border-right: 0;
}
.sidebar {
  width: 425px;
  flex-shrink: 0;
  border-right: 1px solid #7f7f7f;
  padding-left: 62px;
  color: #f2f2f2;
}
.side-title {
  width: 331px;
  font-size: 28px;
  font-weight: 600;
  line-height: 38px;
  margin-top: 39px;
  color: #fff;
}
.side-search {
  width: 331px;
  height: 42px;
  margin-top: 17px;
  background: #2b2b2b;
  border: 1px solid #707070;
  border-radius: 2px;
  display: flex;
  align-items: center;
  gap: 17px;
  padding-left: 20px;
  font-size: 16px;
  color: #8f8f8f;
}
.side-nav {
  list-style: none;
  margin-top: 13px;
}
.side-nav li {
  position: relative;
  width: 331px;
  height: 40px;
  display: flex;
  align-items: center;
  gap: 14.5px;
  padding-left: 17px;
  font-size: 16.3px;
  white-space: nowrap;
}
.side-nav li.on {
  background: #464646;
  border-radius: 3px;
}
.side-nav li.on::before {
  content: "";
  position: absolute;
  left: 3px;
  top: 7px;
  width: 4px;
  height: 25px;
  border-radius: 2px;
  background: #4a9ae0;
}
.nav-ico {
  width: 22px;
  height: 22px;
  fill: none;
  stroke: #dedede;
  stroke-width: 1.2;
  flex-shrink: 0;
}
.nav-fill { fill: #eee; stroke: none; }
.nav-edge { color: #fff; stroke: none; }
.panel {
  flex: 1;
  min-width: 0;
  display: flex;
  flex-direction: column;
  align-items: flex-end;
  padding: 102px 61px 0 0;
  overflow: hidden;
  font-size: 16.8px;
  color: #f0f0f0;
}
.select {
  height: 40px;
  border: 1px solid #6f6f6f;
  border-radius: 2px;
  display: flex;
  align-items: center;
  justify-content: flex-end;
  padding-right: 19px;
  flex-shrink: 0;
}
.select span { margin-right: 17px; }
.chev { width: 16px; height: 10px; color: #e4e4e4; }
.select-dark { width: 104px; }
.select-empty { width: 68px; }
.select-tabs { width: 202px; margin-top: 10px; }
.panel-link {
  align-self: flex-start;
  margin: 49px 0 0 494px;
  font-size: 14px;
  line-height: 15px;
  height: 16px;
  color: #4a9ae0;
  border-bottom: 1px solid #4a9ae0;
}
.panel-link + .select { margin-top: 20px; }
.toggle {
  position: relative;
  width: 50px;
  height: 25px;
  border-radius: 13px;
  background: #0067c0;
  flex-shrink: 0;
}
.toggle::after {
  content: "";
  position: absolute;
  right: 7px;
  top: 6px;
  width: 12px;
  height: 12px;
  border-radius: 50%;
  background: #fff;
}
.toggle.off {
  background: transparent;
  border: 1px solid #777;
}
.toggle.off::after {
  right: auto;
  left: 6px;
  top: 5px;
}
.toggle-first { margin-top: 112px; }
.toggle-gap { margin-top: 25px; }
.toggle-after { margin-top: 18px; }
.save-row {
  display: flex;
  align-self: stretch;
  margin: 92px 15px 0 0;
  justify-content: flex-end;
  flex-shrink: 0;
}
.save-input {
  width: 259px;
  height: 40px;
  border: 1px solid #6f6f6f;
  border-radius: 2px;
  margin-right: 10px;
}
.save-btn {
  width: 61px;
  height: 40px;
  border: 1px solid #474747;
  border-radius: 2px;
  text-align: center;
  line-height: 40px;
  color: #6f6f6f;
  font-size: 15.5px;
}
.edge-scroll {
  width: 10px;
  flex-shrink: 0;
  background: #333;
}
.edge-thumb {
  width: 8px;
  height: 498px;
  background: #808080;
  border-radius: 4px;
}

/* popup of the extension, sits on top of the settings page */
.popup {
  position: absolute;
  left: 459px;
  top: 128px;
  width: 486px;
  height: 892px;
  display: flex;
}
.popup-body {
  width: 461px;
  background: #0e3358;
  padding-left: 41px;
}
.oval {
  width: 379px;
  height: 852px;
  position: relative;
  border: 3px solid #a9d6e5;
  border-top: 0;
  border-radius: 0 0 60px 60px / 0 0 143px 143px;
  text-align: center;
  display: flex;
  flex-direction: column;
  align-items: center;
  font-family: "Liberation Sans", Arial, sans-serif;
  color: #f2fbab;
}
.oval-art {
  position: absolute;
  left: 114px;
  top: 0;
  width: 150px;
  height: 6px;
}
.pop-title {
  margin-top: 42px;
  width: 350px;
  font-size: 40px;
  line-height: 40px;
  font-style: italic;
  font-weight: 700;
}
.pop-sub {
  margin-top: 8px;
  font-size: 26.6px;
  line-height: 30px;
  font-style: italic;
  font-weight: 700;
  white-space: nowrap;
}
.pop-label {
  font-size: 26.6px;
  line-height: 30px;
  font-style: italic;
  white-space: nowrap;
}
.pop-label-a { margin-top: 5px; }
.pop-label-b { margin-top: 19px; }
.pop-input {
  width: 337px;
  height: 49px;
  flex-shrink: 0;
  background: #10024d;
  border: 3px solid #fff;
  border-radius: 25px;
}
.pop-input-a { margin-top: 19px; }
.pop-input-b { margin-top: 20px; }
.pop-btn {
  height: 64px;
  flex-shrink: 0;
  background: #3af4dc;
  border: 3px solid #fff;
  border-radius: 25px;
  font: 26.6px "Liberation Sans", Arial, sans-serif;
  color: #2a108c;
  padding: 0;
}
.pop-submit {
  width: 115px;
  margin-top: 30px;
}
.pop-change {
  width: 207px;
  margin-top: 27px;
}
.pop-loading { margin-top: 40px; }
.pop-stat {
  font-size: 26.6px;
  line-height: 30px;
  font-style: italic;
  font-weight: 700;
  white-space: nowrap;
}
.pop-region { margin-top: 26px; }
.pop-carbon { margin-top: 29px; }
.pop-fossil { margin-top: 27px; }
.pop-scroll {
  width: 25px;
  background: #f1f1f1;
  display: flex;
  flex-direction: column;
  align-items: center;
}
.pop-arrow-up { margin-top: 12px; }
.pop-thumb {
  width: 21px;
  height: 708px;
  margin-top: 142px;
  background: #c1c1c1;
}
.pop-arrow-down { margin-top: 8px; }

/* onedrive toast */
.toast {
  position: absolute;
  left: 1350px;
  top: 819px;
  width: 546px;
  height: 184px;
  display: flex;
  padding-left: 24px;
  background: linear-gradient(100deg, #dbe3ec 0, #e3e4e6 22%, #e4e4e4 100%);
}
.toast-cloud {
  width: 72px;
  height: 46px;
  margin-top: 48px;
  flex-shrink: 0;
}
.toast-text {
  margin-left: 24px;
  padding-top: 31px;
  width: 400px;
  display: flex;
  flex-direction: column;
}
.toast-text strong {
  font-size: 21px;
  font-weight: 600;
  line-height: 30px;
  color: #111;
}
.toast-text p {
  font-size: 21px;
  line-height: 30px;
  color: #5a5a5a;
  width: 370px;
}
.toast-text small {
  margin-top: 9px;
  font-size: 17px;
  line-height: 22px;
  color: #666;
}
```
